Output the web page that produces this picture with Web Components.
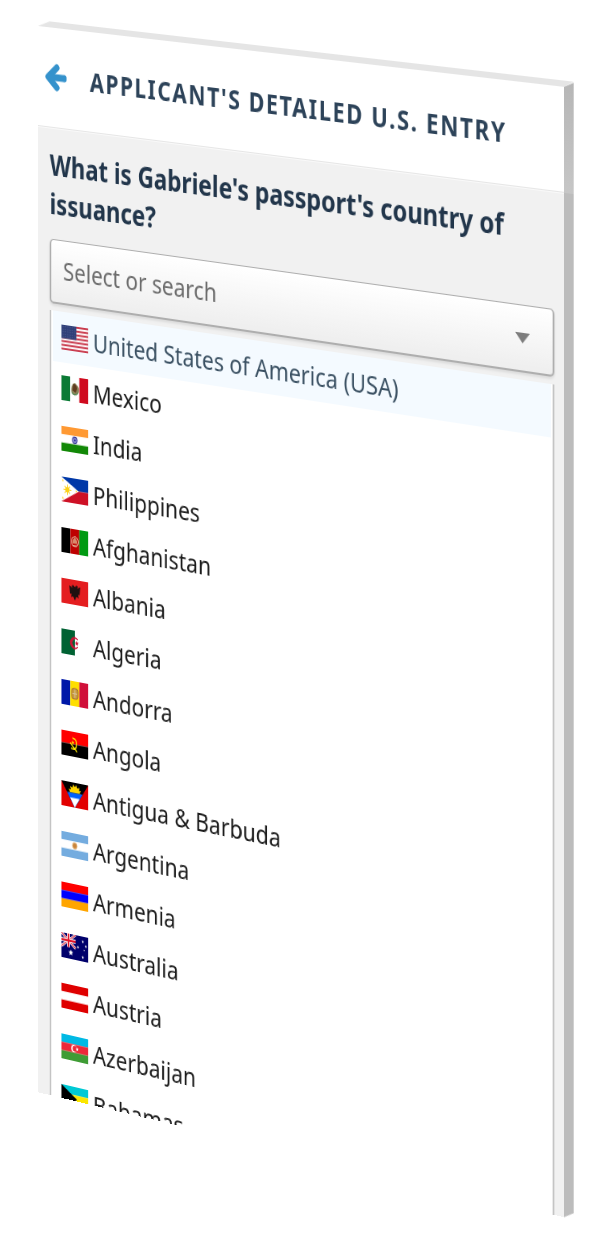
<!DOCTYPE html>
<html lang="en">
<head>
<meta charset="utf-8">
<meta name="viewport" content="width=device-width, initial-scale=1">
<title>Applicant's Detailed U.S. Entry</title>
<style>
    body {
        margin: 0;
        background: #fff;
        font-family: "Noto Sans", "Open Sans", sans-serif;
        font-size: 26px;
        color: #1c1c1c;
    }
</style>
</head>
<body>
<tilted-panel>
    <panel-header slot="header">Applicant's Detailed U.S. Entry</panel-header>
    <country-picker placeholder="Select or search">
        <span slot="label">What is Gabriele's passport's country of issuance?</span>
        <country-option flag="us" selected>United States of America (USA)</country-option>
        <country-option flag="mx">Mexico</country-option>
        <country-option flag="in">India</country-option>
        <country-option flag="ph">Philippines</country-option>
        <country-option flag="af">Afghanistan</country-option>
        <country-option flag="al">Albania</country-option>
        <country-option flag="dz">Algeria</country-option>
        <country-option flag="ad">Andorra</country-option>
        <country-option flag="ao">Angola</country-option>
        <country-option flag="ag">Antigua &amp; Barbuda</country-option>
        <country-option flag="ar">Argentina</country-option>
        <country-option flag="am">Armenia</country-option>
        <country-option flag="au">Australia</country-option>
        <country-option flag="at">Austria</country-option>
        <country-option flag="az">Azerbaijan</country-option>
        <country-option flag="bs">Bahamas</country-option>
    </country-picker>
</tilted-panel>

<script>
const rect = (x, y, w, h, fill) => `<rect x="${x}" y="${y}" width="${w}" height="${h}" fill="${fill}"/>`;
const rows = (...colors) => colors.map((c, i) => rect(0, i * 24 / colors.length, 34, 24 / colors.length, c)).join('');
const cols = (...colors) => colors.map((c, i) => rect(i * 34 / colors.length, 0, 34 / colors.length, 24, c)).join('');
const star = (x, y, r, fill) => {
    const pts = [];
    for (let i = 0; i < 10; i++) {
        const a = Math.PI * (i / 5 - 0.5);
        const d = i % 2 ? r * 0.45 : r;
        pts.push(`${(x + d * Math.cos(a)).toFixed(2)},${(y + d * Math.sin(a)).toFixed(2)}`);
    }
    return `<polygon points="${pts.join(' ')}" fill="${fill}"/>`;
};

function usFlag() {
    let out = rect(0, 0, 34, 24, '#fff');
    for (let i = 0; i < 7; i++) {
        out += rect(0, i * 3.7, 34, 1.85, '#c8374a');
    }
    out += rect(0, 0, 19, 13, '#2f3f78');
    for (let y = 0; y < 5; y++) {
        for (let x = 0; x < 6; x++) {
            out += `<circle cx="${2 + x * 3}" cy="${1.7 + y * 2.4}" r=".4" fill="#8590b8"/>`;
        }
    }
    return out;
}

const FLAGS = {
    us: usFlag(),
    mx: cols('#0b7a35', '#fff', '#cf0a1e') +
        '<path d="M13 9q3-5 6-2 4 2 3 7-3 5-7 3-4-2-2-8z" fill="#8d8458"/><path d="M15 7q4-1 5 4l-2 4-4-2z" fill="#5f3b20"/><path d="M13 15q4 4 8 0" fill="none" stroke="#4f8b57"/>',
    in: rows('#ff9933', '#fff', '#128807') +
        '<circle cx="17" cy="12" r="3" fill="#8d8fd0" stroke="#35379c"/><circle cx="17" cy="12" r="1" fill="#22248f"/>',
    ph: rows('#0038a8', '#ce1126') +
        '<path d="M0 0 22 12 0 24z" fill="#fff"/><circle cx="7.500" cy="12" r="2.600" fill="#fcd116"/><path d="M7.500 7v10M2.500 12h10M4 8.500l7 7M11 8.500l-7 7" stroke="#fcd116" stroke-width="1"/>' +
        star(1.8, 3.5, 1.3, '#fcd116') + star(1.8, 20.5, 1.3, '#fcd116') + star(19, 12, 1.3, '#fcd116'),
    af: cols('#000', '#be0000', '#009a12') +
        '<circle cx="17" cy="12" r="4.500" fill="none" stroke="#e6b59b"/><path d="M14 14v-3l3-3 3 3v3z" fill="#d98a6c"/><path d="M14 16h6" stroke="#e6b59b"/>',
    al: rect(0, 0, 34, 24, '#e41e20') +
        '<path d="M17 7l-2-2-2 1 1 2-4-2 1 8 2 0-1 3 3-1 2 4 2-4 3 1-1-3 2 0 1-8-4 2 1-2-2-1z" fill="#201010"/>',
    dz: rect(0, 0, 34, 24, '#fff') + rect(0, 0, 17, 24, '#006233') +
        '<path d="M21 8.500a5.500 5.500 0 1 0 0 7 4.500 4.500 0 1 1 0-7z" fill="#d21034" stroke="#d21034" stroke-width=".8"/>' + star(19.5, 12, 2.6, '#d21034'),
    ad: cols('#0018a8', '#fedf00', '#d0103a') +
        '<rect x="13" y="7" width="8" height="10" rx="3" fill="#c79a3e" stroke="#a7703a"/><path d="M17 8v8M14 12h6" stroke="#d9c39a"/>',
    ao: rows('#ff0000', '#000') +
        '<path d="M14 6q7 1 5 8-2 4-7 2M11 11l9 8" fill="none" stroke="#ffec00" stroke-width="1.400"/>' + star(14.5, 10.5, 2, '#ffec00'),
    ag: rect(0, 0, 34, 24, '#e20000') +
        '<path d="M0 0h34L17 24z" fill="#000"/>' +
        '<path d="M9 10l2-1-2-2 3 0-1-3 3 1 1-3 2 2 2-2 1 3 3-1-1 3h3l-2 2 2 1z" fill="#ffd600"/>' +
        '<path d="M7 10h20l-10 14z" fill="#0061ff"/><path d="M11 15h12l-6 9z" fill="#fff"/>',
    ar: rows('#74acdf', '#fff', '#74acdf') + '<circle cx="17" cy="12" r="3.300" fill="#e3b57c"/><circle cx="17" cy="12" r="2.300" fill="#c8843c"/>',
    am: rows('#ff0000', '#0000ff', '#ffa500'),
    au: rect(0, 0, 34, 24, '#00006b') +
        '<path d="M0 0l18 13M18 0L0 13" stroke="#fff" stroke-width="2.600"/><path d="M0 0l18 13M18 0L0 13" stroke="#e0263b" stroke-width="1"/>' +
        '<path d="M9 0v13M0 6.500h18" stroke="#fff" stroke-width="4"/><path d="M9 0v13M0 6.500h18" stroke="#e0162b" stroke-width="2.200"/>' +
        star(12, 18, 3.2, '#fff') + star(27, 5, 1.6, '#fff') + star(21, 11, 1.5, '#fff') + star(31, 9, 1.5, '#fff') + star(27, 20, 1.7, '#fff') + star(29, 13, 1, '#fff'),
    at: rows('#df0000', '#fff', '#df0000'),
    az: rows('#00b9e4', '#ed2939', '#3f9c35') +
        '<circle cx="16" cy="12" r="3.600" fill="#fff"/><circle cx="17.200" cy="12" r="2.900" fill="#ed2939"/>' + star(20, 12, 2, '#fff'),
    bs: rows('#00c9d4', '#fbe600', '#00c9d4') + '<path d="M0 0 20 12 0 24z" fill="#000"/>'
};

class TiltedPanel extends HTMLElement {
    connectedCallback() {
        this.attachShadow({ mode: 'open' });
        this.shadowRoot.innerHTML = `
            <style>
                :host {
                    display: block;
                    box-sizing: border-box;
                    height: 100vh;
                    padding: 26px 0 0 38px;
                    overflow: hidden;
                }
                .panel {
                    position: relative;
                    width: calc(100vw + 29px);
                    height: calc(100vh - 165px);
                    transform-origin: 0 0;
                    transform: perspective(6830px) skewY(6.6deg) rotateY(-38deg) scale(0.99);
                }
                .face {
                    display: flex;
                    flex-direction: column;
                    height: 100%;
                    background: #f1f1f1;
                    overflow: hidden;
                }
                .content {
                    flex: 1;
                    min-height: 0;
                }
                /* the two visible edges of the slab */
                .panel::before,
                .panel::after {
                    content: "";
                    position: absolute;
                }
                .panel::before {
                    left: 0;
                    right: -11px;
                    bottom: 100%;
                    height: 6px;
                    background: #e5e5e5;
                    clip-path: polygon(0 100%, 15px 0, 100% 0, calc(100% - 11px) 100%);
                }
                .panel::after {
                    left: 100%;
                    top: -5px;
                    bottom: 0;
                    width: 11px;
                    background: linear-gradient(#b6b6b6, #c6c6c6 106px, #bcbcbc 106px);
                    clip-path: polygon(0 5px, 100% 0, 100% calc(100% - 6px), 0 100%);
                }
            </style>
            <div class="panel">
                <main class="face">
                    <slot name="header"></slot>
                    <div class="content"><slot></slot></div>
                </main>
            </div>
        `;
    }
}
customElements.define('tilted-panel', TiltedPanel);

class PanelHeader extends HTMLElement {
    connectedCallback() {
        this.attachShadow({ mode: 'open' });
        this.shadowRoot.innerHTML = `
            <style>
                :host { display: block; }
                header {
                    display: flex;
                    align-items: center;
                    gap: 27px;
                    box-sizing: border-box;
                    height: 101px;
                    padding-left: 8px;
                    background: #fff;
                    border-bottom: 1px solid #e6e6e6;
                    box-shadow: 0 1px #f9f9f9;
                }
                button {
                    display: flex;
                    padding: 0;
                    border: 0;
                    background: none;
                    cursor: pointer;
                }
                h1 {
                    margin: 0;
                    font-size: 26px;
                    font-weight: 700;
                    letter-spacing: 2px;
                    text-transform: uppercase;
                    white-space: nowrap;
                    color: #2d4359;
                }
            </style>
            <header>
                <button type="button" aria-label="Back">
                    <svg width="31" height="28" viewBox="0 0 31 28" fill="none" stroke="#3592cc" stroke-width="7" stroke-linejoin="round">
                        <path d="M16 4 5 14l11 10" stroke-linecap="round"/>
                        <path d="M6 14h20" stroke-width="7"/>
                        <path d="M26 13v2" stroke-width="5" stroke-linecap="round"/>
                    </svg>
                </button>
                <h1><slot></slot></h1>
            </header>
        `;
    }
}
customElements.define('panel-header', PanelHeader);

class CountryPicker extends HTMLElement {
    connectedCallback() {
        const placeholder = this.getAttribute('placeholder') || '';

        this.attachShadow({ mode: 'open' });
        this.shadowRoot.innerHTML = `
            <style>
                :host {
                    display: flex;
                    flex-direction: column;
                    box-sizing: border-box;
                    height: 100%;
                    padding: 18px 11px 0 15px;
                }
                label {
                    margin-bottom: 16px;
                    font-size: 28px;
                    line-height: 39px;
                    font-weight: 700;
                    color: #22364b;
                }
                .field {
                    position: relative;
                    flex: none;
                    display: flex;
                }
                input {
                    flex: 1;
                    box-sizing: border-box;
                    height: 65px;
                    padding: 0 60px 4px 15px;
                    border: solid #aeaeae;
                    border-width: 1px 2px 2px;
                    border-radius: 5px;
                    background: linear-gradient(#fff, #eee);
                    box-shadow: 0 2px 3px rgba(0, 0, 0, 0.1);
                    font: inherit;
                    color: inherit;
                    outline: 0;
                }
                input::placeholder {
                    color: #6c6c6c;
                    opacity: 1;
                }
                .field svg {
                    position: absolute;
                    right: 28px;
                    top: 50%;
                    margin-top: -6px;
                    pointer-events: none;
                }
                .list {
                    flex: 1;
                    min-height: 0;
                    margin-top: 7px;
                    padding: 0 2px;
                    border: solid #c4c4c4;
                    border-width: 0 2px;
                    background: #fff;
                    overflow: hidden;
                }
            </style>
            <label for="country"><slot name="label"></slot></label>
            <div class="field">
                <input id="country" type="text" role="combobox" aria-expanded="true" aria-controls="countries" autocomplete="off" placeholder="${placeholder}">
                <svg width="17" height="10" viewBox="0 0 16 10" preserveAspectRatio="none"><path d="M0 0h16L8 10z" fill="#7d7d7d"/></svg>
            </div>
            <div class="list" id="countries" role="listbox" aria-label="Countries"><slot></slot></div>
        `;
    }
}
customElements.define('country-picker', CountryPicker);

class CountryOption extends HTMLElement {
    connectedCallback() {
        this.setAttribute('role', 'option');
        this.setAttribute('aria-selected', this.hasAttribute('selected'));
        this.attachShadow({ mode: 'open' });
        this.shadowRoot.innerHTML = `
            <style>
                :host {
                    display: flex;
                    align-items: center;
                    gap: 6px;
                    height: 51px;
                    padding-left: 11px;
                    line-height: 36px;
                    white-space: nowrap;
                    cursor: pointer;
                }
                :host([selected]) {
                    background: #f4faff;
                    color: #3b5163;
                }
                svg { flex: none; }
            </style>
            <svg width="34" height="25" viewBox="0 0 34 24" preserveAspectRatio="none" aria-hidden="true">${FLAGS[this.getAttribute('flag')] || ''}</svg>
            <span><slot></slot></span>
        `;
    }
}
customElements.define('country-option', CountryOption);
</script>
</body>
</html>
